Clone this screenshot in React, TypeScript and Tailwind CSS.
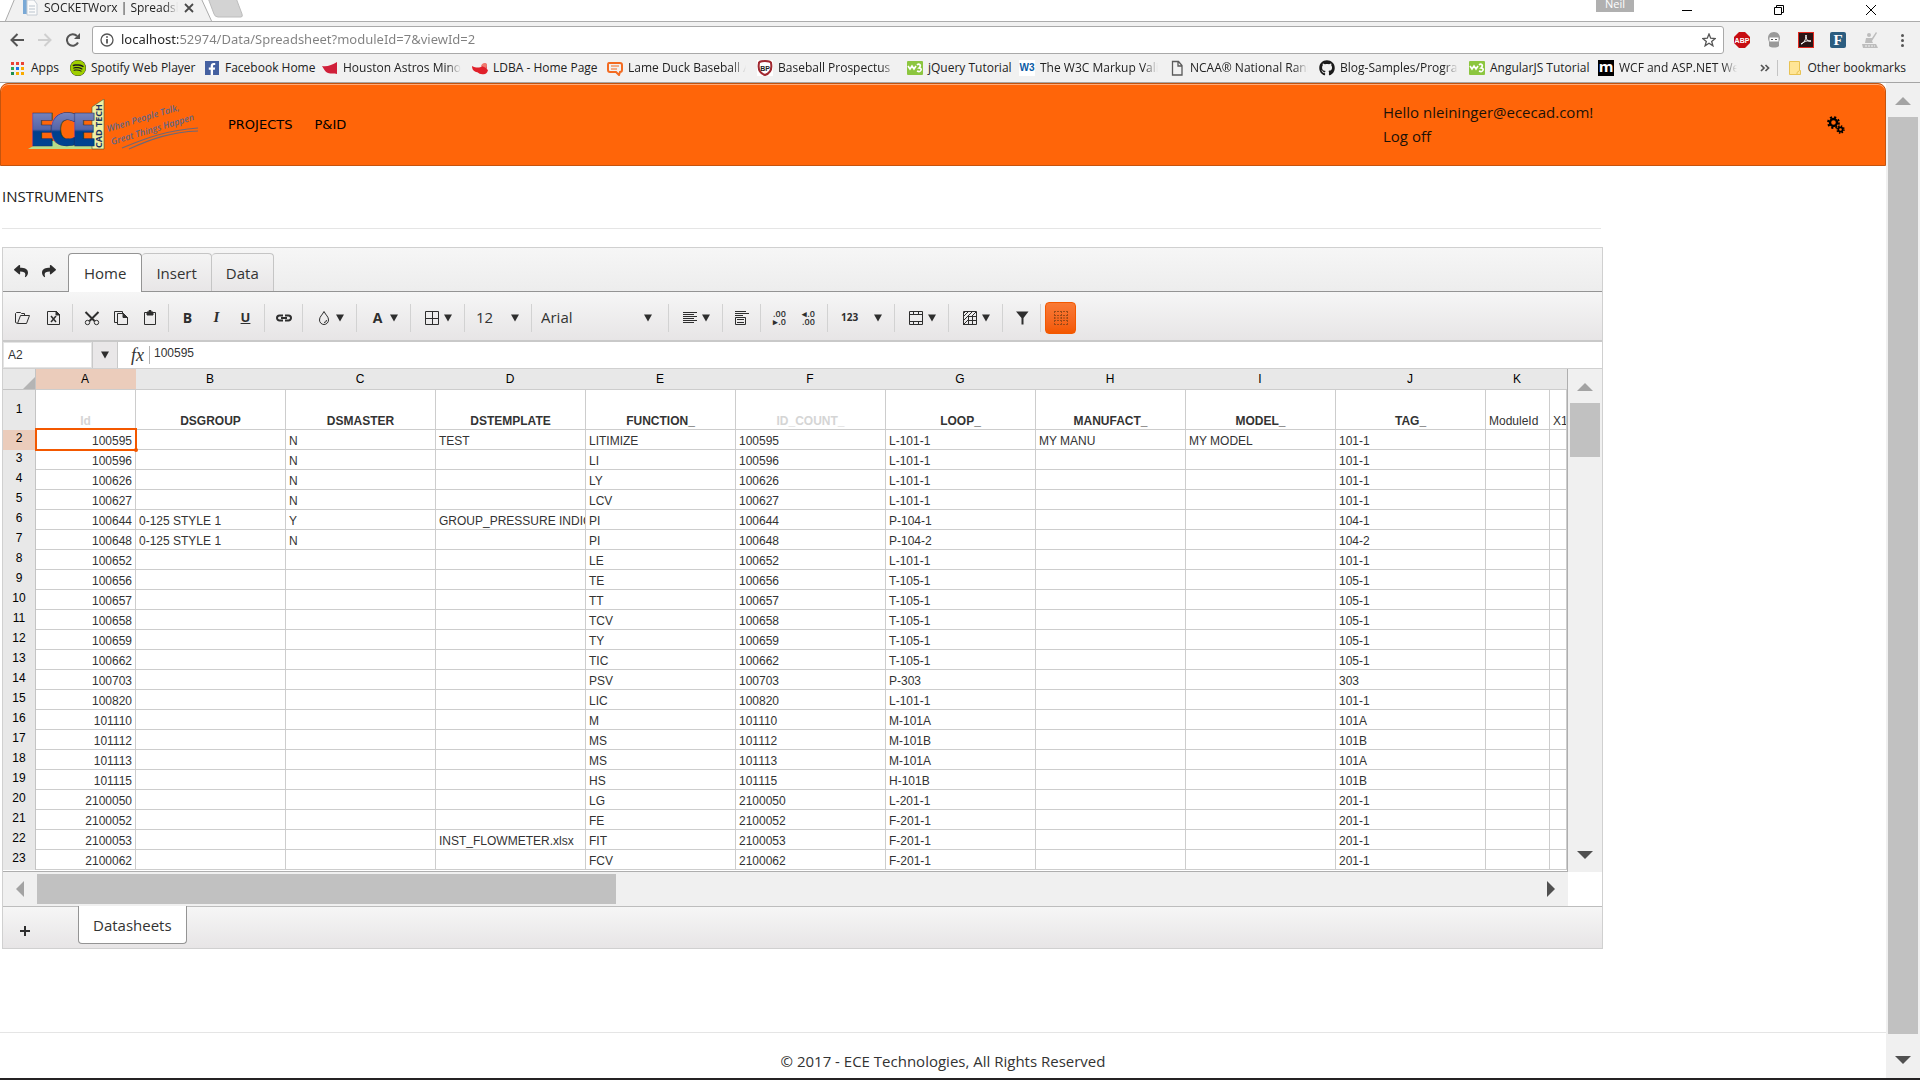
import { useState } from 'react'
import type { ReactNode } from 'react'
import { FaFacebookF, FaGithub, FaReply, FaShare, FaSpotify } from 'react-icons/fa'

const bookmarks = [
  { name: 'Spotify Web Player', width: 'w-[134px]', icon: 'spotify' },
  { name: 'Facebook Home', width: 'w-[118px]', icon: 'facebook' },
  { name: 'Houston Astros Minor League', width: 'w-[150px]', icon: 'astros', cut: true },
  { name: 'LDBA - Home Page', width: 'w-[135px]', icon: 'ldba' },
  { name: 'Lame Duck Baseball Association', width: 'w-[150px]', icon: 'chat', cut: true },
  { name: 'Baseball Prospectus | Baseball', width: 'w-[150px]', icon: 'bp', cut: true },
  { name: 'jQuery Tutorial', width: 'w-[112px]', icon: 'w3s' },
  { name: 'The W3C Markup Validation', width: 'w-[150px]', icon: 'w3c', cut: true },
  { name: 'NCAA® National Rankings', width: 'w-[150px]', icon: 'page', cut: true },
  { name: 'Blog-Samples/Programs', width: 'w-[150px]', icon: 'github', cut: true },
  { name: 'AngularJS Tutorial', width: 'w-[129px]', icon: 'w3s' },
  { name: 'WCF and ASP.NET Web API', width: 'w-[150px]', icon: 'm', cut: true }
]

const columns = [
  { letter: 'A', title: 'Id', width: 'w-[100px]' },
  { letter: 'B', title: 'DSGROUP', width: 'w-[150px]' },
  { letter: 'C', title: 'DSMASTER', width: 'w-[150px]' },
  { letter: 'D', title: 'DSTEMPLATE', width: 'w-[150px]' },
  { letter: 'E', title: 'FUNCTION_', width: 'w-[150px]' },
  { letter: 'F', title: 'ID_COUNT_', width: 'w-[150px]' },
  { letter: 'G', title: 'LOOP_', width: 'w-[150px]' },
  { letter: 'H', title: 'MANUFACT_', width: 'w-[150px]' },
  { letter: 'I', title: 'MODEL_', width: 'w-[150px]' },
  { letter: 'J', title: 'TAG_', width: 'w-[150px]' },
  { letter: 'K', title: 'ModuleId', width: 'w-[64px]' },
  { letter: '', title: 'X1', width: '' }
]

// id, group, master, template, function, loop, manufacturer, model, tag
const instruments = [
  ['100595', '', 'N', 'TEST', 'LITIMIZE', 'L-101-1', 'MY MANU', 'MY MODEL', '101-1'],
  ['100596', '', 'N', '', 'LI', 'L-101-1', '', '', '101-1'],
  ['100626', '', 'N', '', 'LY', 'L-101-1', '', '', '101-1'],
  ['100627', '', 'N', '', 'LCV', 'L-101-1', '', '', '101-1'],
  ['100644', '0-125 STYLE 1', 'Y', 'GROUP_PRESSURE INDICATOR', 'PI', 'P-104-1', '', '', '104-1'],
  ['100648', '0-125 STYLE 1', 'N', '', 'PI', 'P-104-2', '', '', '104-2'],
  ['100652', '', '', '', 'LE', 'L-101-1', '', '', '101-1'],
  ['100656', '', '', '', 'TE', 'T-105-1', '', '', '105-1'],
  ['100657', '', '', '', 'TT', 'T-105-1', '', '', '105-1'],
  ['100658', '', '', '', 'TCV', 'T-105-1', '', '', '105-1'],
  ['100659', '', '', '', 'TY', 'T-105-1', '', '', '105-1'],
  ['100662', '', '', '', 'TIC', 'T-105-1', '', '', '105-1'],
  ['100703', '', '', '', 'PSV', 'P-303', '', '', '303'],
  ['100820', '', '', '', 'LIC', 'L-101-1', '', '', '101-1'],
  ['101110', '', '', '', 'M', 'M-101A', '', '', '101A'],
  ['101112', '', '', '', 'MS', 'M-101B', '', '', '101B'],
  ['101113', '', '', '', 'MS', 'M-101A', '', '', '101A'],
  ['101115', '', '', '', 'HS', 'H-101B', '', '', '101B'],
  ['2100050', '', '', '', 'LG', 'L-201-1', '', '', '201-1'],
  ['2100052', '', '', '', 'FE', 'F-201-1', '', '', '201-1'],
  ['2100053', '', '', 'INST_FLOWMETER.xlsx', 'FIT', 'F-201-1', '', '', '201-1'],
  ['2100062', '', '', '', 'FCV', 'F-201-1', '', '', '201-1']
]

const BookmarkIcon = ({ name }: { name: string }) => {
  switch (name) {
    case 'spotify':
      return <FaSpotify className="size-4 rounded-full bg-[#1a1a1a] text-[#9fcf00]" />
    case 'facebook':
      return (
        <span className="flex size-[14px] items-end justify-end bg-[#4460a0] pr-px text-white">
          <FaFacebookF size={12} />
        </span>
      )
    case 'astros':
      return (
        <svg viewBox="0 0 16 16" className="size-4">
          <path d="M0 6c5 1 10-1 15-4v12c-3-1-6 0-9-1C3 12 2 9 0 6z" fill="#d0203a" />
        </svg>
      )
    case 'ldba':
      return (
        <svg viewBox="0 0 16 16" className="size-4">
          <path d="M0 6c4 2 8 2 10 0 1-3 4-3 5-1 0 3-1 4 1 5-1 4-3 5-7 4-2 0-3-2-5-2C1 11 0 9 0 6z" fill="#e0202a" />
          <path d="M9 6c1-3 4-4 6-2 0 2 0 3-1 4-2-1-3-2-5-2z" fill="#f07a70" />
        </svg>
      )
    case 'chat':
      return (
        <svg viewBox="0 0 16 16" className="size-4" fill="none" stroke="#f36b21" strokeWidth="2">
          <path d="M2 3h11c2 0 2 1 2 2v5c0 1-1 2-2 2l-1 3-3-3H3c-1 0-2-1-2-2V5c0-1 0-2 1-2z" />
          <path d="M4 6h8M4 9h6" strokeWidth="1" />
        </svg>
      )
    case 'bp':
      return (
        <svg viewBox="0 0 16 16" className="size-4">
          <rect width="16" height="16" fill="#fff" />
          <path d="M8 1c3 0 6 1 6 2 1 5 0 10-6 12C2 13 1 8 2 3c0-1 3-2 6-2z" fill="#fff" stroke="#a02830" strokeWidth="2" />
          <text x="8" y="11" textAnchor="middle" fontSize="7" fontWeight="700" fill="#222" fontFamily="Liberation Sans, sans-serif">BP</text>
        </svg>
      )
    case 'w3s':
      return (
        <svg viewBox="0 0 16 16" className="size-4">
          <rect y="1" width="16" height="14" rx="1" fill="#8cc63f" />
          <path d="M1 6l2 3 2-3 2 3 2-3M10 5c2-2 5 0 2 3 4 0 2 5-2 3" fill="none" stroke="#fff" strokeWidth="1.6" />
        </svg>
      )
    case 'w3c':
      return (
        <span className="flex size-4 items-center justify-center bg-white font-['Liberation_Sans',sans-serif] text-[10px] font-bold text-[#0a5ba5]">W3</span>
      )
    case 'page':
      return (
        <svg viewBox="0 0 16 16" className="size-4" fill="none" stroke="#5a5a5a" strokeWidth="1.3">
          <path d="M3.500 1.500h6l3.500 4v9.500h-9.500zM9 1.500v4.500h4" />
        </svg>
      )
    case 'github':
      return <FaGithub className="size-4 text-[#1b1b1b]" />
    default:
      return (
        <span className="flex size-4 items-center justify-center bg-black pb-1 font-['Open_Sans',sans-serif] text-[15px] leading-none font-bold text-white">m</span>
      )
  }
}

const Icon = ({ children }: { children: ReactNode }) => (
  <svg viewBox="0 0 16 16" className="size-4 shrink-0" fill="none" stroke="#2e2e2e" strokeWidth="1">
    {children}
  </svg>
)

const Caret = () => (
  <svg viewBox="0 0 8 8" className="size-2 shrink-0" fill="#2e2e2e">
    <path d="M0 0.500h8L4 7.500z" />
  </svg>
)

const ToolButton = ({ label, children }: { label: string; children: ReactNode }) => (
  <button type="button" aria-label={label} className="flex h-8 w-[29px] items-center justify-center text-[#2e2e2e]">
    {children}
  </button>
)

const DropButton = ({ label, children }: { label: string; children: ReactNode }) => (
  <button type="button" aria-label={label} className="flex h-8 w-[45px] items-center justify-center gap-1 text-[#2e2e2e]">
    {children}
    <Caret />
  </button>
)

const ToolGroup = ({ children }: { children: ReactNode }) => (
  <div className="flex h-7 shrink-0 items-center border-r border-[#d2d2d2] px-1">{children}</div>
)

const Logo = () => (
  <svg viewBox="0 0 174 52" className="h-[52px] w-[174px]" role="img" aria-label="ECE CAD TECH">
    <defs>
      <linearGradient id="steel" x1="0" y1="0" x2="0" y2="1">
        <stop offset="0.250" stopColor="#7783bd" />
        <stop offset="0.520" stopColor="#5565a8" />
        <stop offset="0.560" stopColor="#003f8c" />
        <stop offset="1" stopColor="#004a98" />
      </linearGradient>
    </defs>
    <path d="M0 50l14-8h50V8l12-8v50z" fill="#b5dc8a" />
    <path d="M64 8L76 0v50H64z" fill="#eef0a6" stroke="#4a5230" strokeWidth="0.600" />
    <text x="1 21 43" y="47" fontFamily="'Open Sans', sans-serif" fontWeight="800" fontSize="46" fill="url(#steel)" stroke="#1a2c5c" strokeWidth="0.500">ECE</text>
    <text transform="translate(74 49) rotate(-90)" fontSize="9" fontWeight="700" fill="#1c3260" fontFamily="'Open Sans', sans-serif">CAD TECH</text>
    <g fill="#5f6585" fontFamily="'Open Sans', sans-serif" fontStyle="italic" fontWeight="600" fontSize="9">
      <text transform="translate(80 33) rotate(-17)">When People Talk,</text>
      <text transform="translate(84 46) rotate(-17)">Great Things Happen</text>
    </g>
    <path d="M94 49c24-10 46-18 76-20M101 50c22-10 42-17 69-18" fill="none" stroke="#6b6878" strokeWidth="1.200" />
  </svg>
)

const BrowserBar = () => (
  <div className="bg-[#f1f1f1] font-['Open_Sans','Noto_Sans',sans-serif] text-xs text-[#222]">
    {/* tab strip */}
    <div className="flex h-[22px] overflow-hidden border-b border-[#acacac] bg-white">
      <div className="relative h-[22px] w-[250px] shrink-0">
        <svg viewBox="0 0 250 22" className="absolute inset-0 h-[22px] w-[250px]">
          <path d="M5 22L15 -2H201L212 22z" fill="#f1f1f1" stroke="#acacac" />
          <path d="M208 -2L214 14q1 3 4 3h23q2 0 1-3L236 -2z" fill="#d3d3d3" stroke="#bcbcbc" />
        </svg>
        <div className="relative flex h-4 items-center pl-[22px]">
          <svg viewBox="0 0 16 16" className="size-4">
            <path d="M1 0h4v14H1z" fill="#7aa9d6" />
            <path d="M5 0h7l3 4v11H5z" fill="#fbfbfb" stroke="#c5ccd4" />
            <path d="M7 6h6M7 9h6M7 12h6" stroke="#b9c3cd" />
          </svg>
          <span className="ml-1.5 w-[134px] overflow-hidden whitespace-nowrap [mask-image:linear-gradient(90deg,#000_90%,transparent)]">SOCKETWorx | Spreadsheet</span>
          <button type="button" aria-label="Close tab" className="ml-1.5">
            <svg viewBox="0 0 10 10" className="size-[10px]" stroke="#4a4a4a" strokeWidth="1.800">
              <path d="M1 1l8 8M9 1L1 9" />
            </svg>
          </button>
        </div>
      </div>
      <div className="ml-auto flex items-start">
        <span className="flex h-3 w-[38px] items-end justify-center overflow-hidden bg-[#b0b0b0] text-[11px] leading-[17px] text-white">Neil</span>
        <button type="button" aria-label="Minimize" className="flex h-5 w-[106px] items-center justify-center">
          <span className="h-px w-[10px] bg-black" />
        </button>
        <button type="button" aria-label="Restore" className="flex h-5 w-[78px] items-center justify-center">
          <svg viewBox="0 0 10 10" className="size-[10px]" fill="none" stroke="#000">
            <path d="M0.500 2.500h7v7h-7zM2.500 2.500v-2h7v7h-2" />
          </svg>
        </button>
        <button type="button" aria-label="Close" className="flex h-5 w-[102px] items-center justify-center pl-1">
          <svg viewBox="0 0 10 10" className="size-[10px]" stroke="#000">
            <path d="M0 0l10 10M10 0L0 10" />
          </svg>
        </button>
      </div>
    </div>

    {/* address row */}
    <div className="flex h-9 items-center pr-[10px] pl-[10px]">
      <button type="button" aria-label="Back" className="mr-[14px]">
        <svg viewBox="0 0 14 14" className="size-[14px]" fill="none" stroke="#555" strokeWidth="2">
          <path d="M14 7H2M7.500 1L1.500 7l6 6" />
        </svg>
      </button>
      <button type="button" aria-label="Forward" className="mr-[14px]">
        <svg viewBox="0 0 14 14" className="size-[14px]" fill="none" stroke="#cfcfcf" strokeWidth="2">
          <path d="M0 7h12M6.500 1l6 6-6 6" />
        </svg>
      </button>
      <button type="button" aria-label="Reload" className="mr-[12px]">
        <svg viewBox="0 0 14 14" className="size-[14px]" fill="none" stroke="#555" strokeWidth="2">
          <path d="M12 9.500A5.800 5.800 0 1 1 11 3" />
          <path d="M14 0v6H8z" fill="#555" stroke="none" />
        </svg>
      </button>
      <div className="flex h-7 flex-1 items-center rounded-[3px] border border-[#a9a9a9] bg-white px-[7px]">
        <svg viewBox="0 0 14 14" className="size-[14px]" fill="none" stroke="#555" strokeWidth="1.300">
          <circle cx="7" cy="7" r="6" />
          <path d="M7 6v4.500M7 3.200v1.500" strokeWidth="1.800" />
        </svg>
        <input
          aria-label="Address"
          defaultValue="localhost:52974/Data/Spreadsheet?moduleId=7&viewId=2"
          className="ml-[7px] min-w-0 flex-1 bg-[linear-gradient(90deg,#222_57px,#808080_57px)] bg-clip-text font-['Noto_Sans',sans-serif] text-[13px] text-transparent outline-none"
        />
        <button type="button" aria-label="Bookmark this page">
          <svg viewBox="0 0 14 14" className="size-[14px]" fill="none" stroke="#555" strokeWidth="1.300">
            <path d="M7 1l1.700 4.200 4.500.3-3.500 2.900 1.200 4.400L7 10.300l-3.900 2.500 1.200-4.400L.8 5.500l4.500-.3z" />
          </svg>
        </button>
      </div>
      <div className="ml-[10px] flex items-center gap-4">
        <svg viewBox="0 0 16 16" className="size-4">
          <path d="M5 0h6l5 5v6l-5 5H5l-5-5V5z" fill="#c70d12" />
          <text x="8" y="11" textAnchor="middle" fontSize="7" fontWeight="700" fill="#fff" fontFamily="Liberation Sans, sans-serif">ABP</text>
        </svg>
        <svg viewBox="0 0 16 16" className="size-4" fill="#9a9a9a">
          <path d="M8 0c4 0 6 3 6 6 0 2-1 3-1 4v4c-2 2-8 2-10 0v-4c0-1-1-2-1-4 0-3 2-6 6-6z" />
          <path d="M3.500 5.500h9v4h-9z" fill="#fff" />
          <path d="M5 7h2v1H5zM9 7h2v1H9z" fill="#555" />
        </svg>
        <svg viewBox="0 0 16 16" className="size-4">
          <rect x="0.500" y="0.500" width="15" height="15" fill="#2b1415" stroke="#e2281f" />
          <path d="M3 12c3-1 5-4 5-9 0 5 2 7 5 6-4-1-7 1-10 3z" fill="none" stroke="#fff" />
        </svg>
        <svg viewBox="0 0 16 16" className="size-4">
          <rect width="16" height="16" rx="2" fill="#2c5d80" />
          <text x="8" y="13" textAnchor="middle" fontSize="15" fontWeight="700" fill="#fff" fontFamily="Liberation Serif, serif">F</text>
        </svg>
        <svg viewBox="0 0 16 16" className="size-4" fill="#bdbdbd">
          <circle cx="7" cy="3" r="2" />
          <path d="M4 6h6l4-6 1 1-5 8 1 2H3zM0 12h14l2 4H1z" />
          <path d="M3 14h10" stroke="#f1f1f1" strokeDasharray="2 1" />
        </svg>
        <button type="button" aria-label="Menu" className="flex w-4 flex-col items-center gap-[2px]">
          <span className="size-[3px] rounded-full bg-[#555]" />
          <span className="size-[3px] rounded-full bg-[#555]" />
          <span className="size-[3px] rounded-full bg-[#555]" />
        </button>
      </div>
    </div>

    {/* bookmarks */}
    <div className="flex h-[25px] items-center border-b border-[#a5a5a5] pb-1 pl-[11px]">
      <a href="#apps" className="flex w-[59px] shrink-0 items-center gap-[7px]">
        <svg viewBox="0 0 13 13" className="size-[13px]">
          <path d="M0 0h3v3H0zM5 0h3v3H5zM10 0h3v3h-3z" fill="#ea4335" />
          <path d="M0 5h3v3H0z" fill="#34a853" />
          <path d="M5 5h3v3H5z" fill="#1a73e8" />
          <path d="M10 5h3v3h-3zM5 10h3v3H5zM10 10h3v3h-3z" fill="#f9ab00" />
          <path d="M0 10h3v3H0z" fill="#1e8e4e" />
        </svg>
        Apps
      </a>
      {bookmarks.map((item) => (
        <a key={item.name} href="#bookmark" className={`flex shrink-0 items-center gap-[5px] ${item.width}`}>
          <span className="flex w-4 shrink-0 justify-center">
            <BookmarkIcon name={item.icon} />
          </span>
          <span className={`whitespace-nowrap ${item.cut ? 'w-[118px] overflow-hidden [mask-image:linear-gradient(90deg,#000_88%,transparent)]' : ''}`}>{item.name}</span>
        </a>
      ))}
      <div className="ml-auto flex items-center pr-[14px]">
        <button type="button" aria-label="More bookmarks" className="mr-[7px]">
          <svg viewBox="0 0 10 8" className="h-2 w-[10px]" fill="none" stroke="#555" strokeWidth="1.700">
            <path d="M1 1l3 3-3 3M5.500 1l3 3-3 3" />
          </svg>
        </button>
        <a href="#other" className="flex items-center gap-[5px] border-l border-[#c4c4c4] pl-[10px] whitespace-nowrap">
          <svg viewBox="0 0 14 16" className="h-4 w-[14px]" fill="#ffe596" stroke="#e8c252">
            <path d="M1.500 1.500h10v9h1v4h-11zM9 14.500v-2l2.500-2" />
          </svg>
          Other bookmarks
        </a>
      </div>
    </div>
  </div>
)

const Header = () => (
  <header className="flex h-[83px] items-center rounded-t-lg border border-[#c4540f] bg-[#ff6509] shadow-[inset_0_1px_0_#ffab7a]">
    <a href="#home" className="ml-[27px]">
      <Logo />
    </a>
    <nav className="ml-[26px] flex gap-[22px] font-['DejaVu_Sans',sans-serif] text-[13px] text-black">
      <a href="#projects">PROJECTS</a>
      <a href="#pid">P&amp;ID</a>
    </nav>
    <div className="ml-auto flex w-[502px] items-center justify-between pr-10 pb-[2px] text-[15px] leading-6 text-[#1c1208]">
      <div>
        <p>Hello nleininger@ececad.com!</p>
        <a href="#logoff">Log off</a>
      </div>
      <button type="button" aria-label="Settings" className="pt-[3px]">
        <svg viewBox="0 0 18 18" className="size-[18px]" fill="none" stroke="#000">
          <circle cx="6.500" cy="6.500" r="3.500" strokeWidth="2.400" />
          <circle cx="6.500" cy="6.500" r="5.400" strokeWidth="2" strokeDasharray="2.120 2.120" />
          <circle cx="13.500" cy="13.500" r="2.200" strokeWidth="1.800" />
          <circle cx="13.500" cy="13.500" r="3.500" strokeWidth="1.600" strokeDasharray="1.375 1.375" />
        </svg>
      </button>
    </div>
  </header>
)

const RibbonTabs = () => {
  const [activeTab, setActiveTab] = useState('Home')
  const tabs = ['Home', 'Insert', 'Data']

  return (
    <div className="flex h-11 items-end border-b border-[#949494] bg-gradient-to-b from-[#f6f6f6] to-[#ededed]">
      <div className="flex w-[65px] shrink-0 items-center gap-[14px] self-stretch pt-[3px] pl-[11px] text-[#2e2e2e]">
        <button type="button" aria-label="Undo">
          <FaReply size={14} />
        </button>
        <button type="button" aria-label="Redo">
          <FaShare size={14} />
        </button>
      </div>
      {tabs.map((tab) => (
        <button
          key={tab}
          type="button"
          onClick={() => setActiveTab(tab)}
          className={
            activeTab === tab
              ? '-mb-px h-[39px] rounded-t-[4px] border border-b-0 border-[#949494] bg-white px-[15px] text-[15px] text-[#333]'
              : 'h-[38px] rounded-t-[4px] border border-l-0 border-b-0 border-[#c5c5c5] bg-gradient-to-b from-[#f4f4f4] to-[#e8e6e7] px-[14px] pt-[2px] text-[15px] text-[#333]'
          }
        >
          {tab}
        </button>
      ))}
    </div>
  )
}

const Toolbar = () => (
  <div className="flex h-[50px] items-center border-b-2 border-[#c9c9c9] bg-gradient-to-b from-[#f6f6f6] to-[#e7e5e6] pt-[3px]">
    <ToolGroup>
      <ToolButton label="Open">
        <Icon><path d="M3.500 13.500h9l3-8h-9l-3 8l-2-1v-9l1-1h4l1 1h3v2" /></Icon>
      </ToolButton>
      <span className="w-[3px]" />
      <ToolButton label="Export to Excel">
        <Icon><path d="M1.500 1.500h9l3 3v10h-12z" /><path d="M10 1l4 4h-4z" fill="#2e2e2e" /><path d="M5 6l5 6M10 6l-5 6" strokeWidth="1.500" /></Icon>
      </ToolButton>
    </ToolGroup>
    <ToolGroup>
      <ToolButton label="Cut">
        <Icon><path d="M1.500 2l9 9M14.500 2l-9 9" strokeWidth="2" /><circle cx="3.500" cy="12.500" r="2.200" /><circle cx="12.500" cy="12.500" r="2.200" /></Icon>
      </ToolButton>
      <ToolButton label="Copy">
        <Icon><path d="M4.500 3.500h6l4 4v7h-10z" /><path d="M10 3.500v4h4.500z" fill="#2e2e2e" /><path d="M4 12.500H1.500v-11h8v2" /></Icon>
      </ToolButton>
      <ToolButton label="Paste">
        <Icon><path d="M2.500 2.500h11v12h-11z" /><path d="M5 2h2V.5h2V2h2v3H5z" fill="#2e2e2e" /></Icon>
      </ToolButton>
    </ToolGroup>
    <ToolGroup>
      <ToolButton label="Bold"><b className="text-sm">B</b></ToolButton>
      <ToolButton label="Italic"><b className="font-['Liberation_Serif',serif] text-[15px] italic">I</b></ToolButton>
      <ToolButton label="Underline"><b className="text-[13px] underline">U</b></ToolButton>
    </ToolGroup>
    <ToolGroup>
      <ToolButton label="Hyperlink">
        <Icon><path d="M7 5.500H3.500a2.500 2.500 0 0 0 0 5H7M9 5.500h3.500a2.500 2.500 0 0 1 0 5H9M5 8h6" strokeWidth="2" /></Icon>
      </ToolButton>
    </ToolGroup>
    <ToolGroup>
      <DropButton label="Background">
        <Icon><path d="M8 1.500c2 4 4.500 5 4.500 8.500a4.500 4.500 0 0 1-9 0C3.500 6.500 6 5.500 8 1.500z" /><path d="M8 12.500a2.500 2.500 0 0 0 2.500-2.500" /></Icon>
      </DropButton>
    </ToolGroup>
    <ToolGroup>
      <DropButton label="Text color"><b className="w-4 text-center text-sm">A</b></DropButton>
    </ToolGroup>
    <ToolGroup>
      <DropButton label="Borders">
        <Icon><path d="M1.500 1.500h13v13h-13zM8.500 1v14M1 8.500h14" /></Icon>
      </DropButton>
    </ToolGroup>
    <ToolGroup>
      <label className="relative flex h-8 w-[58px] items-center">
        <select aria-label="Font size" className="h-8 w-full appearance-none pl-[7px] text-[15px] text-[#333] outline-none">
          <option>12</option>
        </select>
        <span className="pointer-events-none absolute right-2"><Caret /></span>
      </label>
    </ToolGroup>
    <ToolGroup>
      <label className="relative flex h-8 w-[128px] items-center">
        <select aria-label="Font" className="h-8 w-full appearance-none pl-[5px] text-[15px] text-[#333] outline-none">
          <option>Arial</option>
        </select>
        <span className="pointer-events-none absolute right-3"><Caret /></span>
      </label>
    </ToolGroup>
    <ToolGroup>
      <DropButton label="Alignment">
        <Icon><path d="M1 2.500h14M1 4.500h11M1 6.500h14M1 8.500h11M1 10.500h14M1 12.500h11" /></Icon>
      </DropButton>
    </ToolGroup>
    <ToolGroup>
      <ToolButton label="Wrap text">
        <Icon><path d="M1 1.500h11M1 3.500h14M1 5.500h8" strokeWidth="1.200" /><path d="M1.500 7.500h10v7h-10zM3 9.500h7M3 12.500h7" /></Icon>
      </ToolButton>
    </ToolGroup>
    <ToolGroup>
      <ToolButton label="Decrease decimal">
        <span className="flex flex-col items-end text-[9px] leading-[8px] font-semibold"><span>.00</span><span>▸.0</span></span>
      </ToolButton>
      <ToolButton label="Increase decimal">
        <span className="flex flex-col items-end text-[9px] leading-[8px] font-semibold"><span>◂.0</span><span>.00</span></span>
      </ToolButton>
    </ToolGroup>
    <ToolGroup>
      <button type="button" className="flex h-8 w-[58px] items-center justify-between pr-2 pl-[9px] text-[10px] font-bold text-[#2e2e2e]">
        123
        <Caret />
      </button>
    </ToolGroup>
    <ToolGroup>
      <DropButton label="Merge cells">
        <Icon><path d="M1.500 1.500h13v13h-13zM1 4.500h14M1 11.500h14M5.500 1v3M10.500 1v3M5.500 12v3M10.500 12v3" /></Icon>
      </DropButton>
    </ToolGroup>
    <ToolGroup>
      <DropButton label="Freeze panes">
        <Icon><path d="M1.500 1.500h13v13h-13zM6.500 5v10M10.500 5v10M5 6.500h10M5 10.500h10M1 7l5-5M1 11L10 2M1 15l5-5M11 5l3-3M1 4l3-3" /></Icon>
      </DropButton>
    </ToolGroup>
    <ToolGroup>
      <ToolButton label="Filter">
        <Icon><path d="M2 1.500h12.500L9.500 8v6.500H7.500V8z" fill="#2e2e2e" stroke="none" /></Icon>
      </ToolButton>
    </ToolGroup>
    <button type="button" aria-label="Gridlines" className="ml-[4px] flex h-8 w-[31px] items-center justify-center rounded-[4px] border border-[#f35800] bg-gradient-to-b from-[#f97a35] to-[#f35800]">
      <svg viewBox="0 0 16 16" className="size-4" fill="none" stroke="#9c4a17" strokeDasharray="2 1">
        <path d="M1 1.500h14M1 5.500h14M1 10.500h14M1 14.500h14M1.500 1v14M8.500 1v14M14.500 1v14M1 8h14" />
      </svg>
    </button>
  </div>
)

const cellBorder = 'border-r border-b border-[#cdcdcd]'

const Grid = () => (
  <div className="min-w-0 flex-1 overflow-hidden border-r border-b border-[#aeaeae] pb-px font-['Liberation_Sans',Arial,sans-serif] text-xs">
    <table className="w-full table-fixed border-separate border-spacing-0">
      <colgroup>
        <col className="w-[33px]" />
        {columns.map((col) => (
          <col key={col.title} className={col.width} />
        ))}
      </colgroup>
      <thead>
        <tr className="h-[21px] bg-[#e8e8e8] text-black">
          <th className="border-r border-b border-[#c4c4c4] p-0" aria-label="Select all">
            <svg viewBox="0 0 32 20" className="block h-5 w-8">
              <path d="M32 8v12H20z" fill="#b4b4b4" />
            </svg>
          </th>
          {columns.map((col) => (
            <th key={col.title} scope="col" className={`border-b border-[#cdcdcd] p-0 pr-0.5 leading-5 font-normal ${col.letter === 'A' ? 'bg-[#ebccbb]' : ''}`}>
              {col.letter}
            </th>
          ))}
        </tr>
      </thead>
      <tbody className="text-[#333]">
        <tr className="h-10">
          <th scope="row" className="border-r border-[#c4c4c4] bg-[#e8e8e8] p-0 pb-0.5 font-normal text-black">1</th>
          {columns.map((col) => {
            const plain = col.title === 'ModuleId' || col.title === 'X1'
            const muted = col.title === 'Id' || col.title === 'ID_COUNT_'
            return (
              <td
                key={col.title}
                className={`${cellBorder} overflow-hidden px-[3px] pt-0 pb-0 align-bottom leading-4 whitespace-nowrap ${plain ? '' : 'text-center font-bold'} ${muted ? 'text-[#d5d5d5]' : ''}`}
              >
                {col.title}
              </td>
            )
          })}
        </tr>
        {instruments.map(([id, group, master, template, fn, loop, manufacturer, model, tag], index) => (
          <tr key={id} className="h-5">
            <th scope="row" className={`border-r border-[#c4c4c4] p-0 align-top leading-4 font-normal text-black ${index === 0 ? 'bg-[#ebccbb]' : 'bg-[#e8e8e8]'}`}>
              {index + 2}
            </th>
            <td className={`${cellBorder} relative px-[3px] py-0 pt-[3px] text-right leading-4`}>
              {id}
              {index === 0 && (
                <span className="absolute -top-[2px] -right-[2px] -bottom-[2px] -left-px z-10 border-2 border-[#f35800]">
                  <span className="absolute -right-[3px] -bottom-[3px] size-1 rounded-full bg-[#f35800]" />
                </span>
              )}
            </td>
            {[group, master, template, fn, id, loop, manufacturer, model, tag, '', ''].map((value, i) => (
              <td key={i} className={`${cellBorder} overflow-hidden px-[3px] py-0 pt-[3px] leading-4 whitespace-nowrap`}>
                {value}
              </td>
            ))}
          </tr>
        ))}
      </tbody>
    </table>
  </div>
)

const Spreadsheet = () => (
  <section className="mt-[18px] border border-[#d0d0d0]">
    <RibbonTabs />
    <Toolbar />

    {/* formula bar */}
    <div className="flex h-[27px] items-stretch border-b border-[#d0d0d0] font-['Liberation_Sans',Arial,sans-serif] text-xs text-[#333]">
      <input aria-label="Cell name" defaultValue="A2" className="w-[89px] border border-[#e4e4e4] pl-1 outline-none" />
      <button type="button" aria-label="Names" className="flex w-[26px] items-center justify-center border-x border-[#c9c9c9] bg-[#e9e7e8] pr-px">
        <Caret />
      </button>
      <label htmlFor="formula" className="my-1 ml-[13px] flex w-[19px] items-center border-r border-[#b4b4b4] font-['Liberation_Serif',serif] text-lg leading-4 italic">fx</label>
      <input id="formula" defaultValue="100595" className="ml-1 min-w-0 flex-1 pb-1 outline-none" />
    </div>

    <div className="flex">
      <Grid />
      <div className="flex w-[34px] shrink-0 flex-col items-center bg-[#f0f0f0]">
        <button type="button" aria-label="Scroll up" className="flex h-[34px] items-center pt-[2px]">
          <svg viewBox="0 0 16 8" className="h-2 w-4" fill="#a3a3a3"><path d="M0 8h16L8 0z" /></svg>
        </button>
        <div className="h-[54px] w-[30px] bg-[#c1c1c1]" />
        <button type="button" aria-label="Scroll down" className="mt-auto flex h-[34px] items-center">
          <svg viewBox="0 0 16 8" className="h-2 w-4" fill="#505050"><path d="M0 0h16L8 8z" /></svg>
        </button>
      </div>
    </div>

    <div className="flex h-[34px] pr-[34px]">
      <div className="flex flex-1 items-center bg-[#f0f0f0]">
        <button type="button" aria-label="Scroll left" className="flex w-[34px] justify-center">
          <svg viewBox="0 0 8 16" className="h-4 w-2" fill="#a3a3a3"><path d="M8 0v16L0 8z" /></svg>
        </button>
        <div className="h-[30px] w-[37%] bg-[#c1c1c1]" />
        <button type="button" aria-label="Scroll right" className="ml-auto flex w-[34px] justify-center">
          <svg viewBox="0 0 8 16" className="h-4 w-2" fill="#505050"><path d="M0 0v16l8-8z" /></svg>
        </button>
      </div>
    </div>

    {/* sheet tabs */}
    <div className="flex h-[42px] items-start border-t border-[#bdbdbd] bg-gradient-to-b from-[#f6f6f6] to-[#e7e5e6]">
      <button type="button" aria-label="Add sheet" className="mr-[31px] flex h-12 w-11 items-center justify-center">
        <svg viewBox="0 0 10 10" className="size-[10px]" stroke="#2e2e2e" strokeWidth="2"><path d="M5 0v10M0 5h10" /></svg>
      </button>
      <button type="button" className="-mt-px h-[38px] rounded-b-[4px] border border-t-0 border-[#949494] bg-white px-[14px] pt-0.5 text-[15px] text-[#333]">
        Datasheets
      </button>
    </div>
  </section>
)

const App = () => {
  return (
    <div className="flex min-h-screen flex-col bg-white font-['Open_Sans','Noto_Sans',sans-serif]">
      <BrowserBar />
      <div className="flex flex-1">
        <div className="flex min-w-0 flex-1 flex-col">
          <Header />
          <main className="w-full max-w-[1603px] pt-[18px] pl-[2px]">
            <h1 className="text-[15px] leading-6 text-[#222]">INSTRUMENTS</h1>
            <hr className="mt-5 mr-0.5 border-[#e5e5e5]" />
            <Spreadsheet />
          </main>
          <footer className="mt-auto border-t border-[#e5e5e5] pt-4 pb-[5px] text-center text-[15px] leading-6 text-[#333]">
            © 2017 - ECE Technologies, All Rights Reserved
          </footer>
        </div>

        {/* page scrollbar */}
        <div className="flex w-[34px] shrink-0 flex-col items-center bg-[#f0f0f0]">
          <button type="button" aria-label="Page up" className="flex h-[34px] items-center pt-[2px]">
            <svg viewBox="0 0 16 8" className="h-2 w-4" fill="#a3a3a3"><path d="M0 8h16L8 0z" /></svg>
          </button>
          <div className="w-[30px] flex-1 bg-[#c1c1c1]" />
          <button type="button" aria-label="Page down" className="flex h-11 items-center pt-2">
            <svg viewBox="0 0 16 8" className="h-2 w-4" fill="#505050"><path d="M0 0h16L8 8z" /></svg>
          </button>
        </div>
      </div>
      <div className="h-[2px] bg-[#252324]" />
    </div>
  )
}

export default App
